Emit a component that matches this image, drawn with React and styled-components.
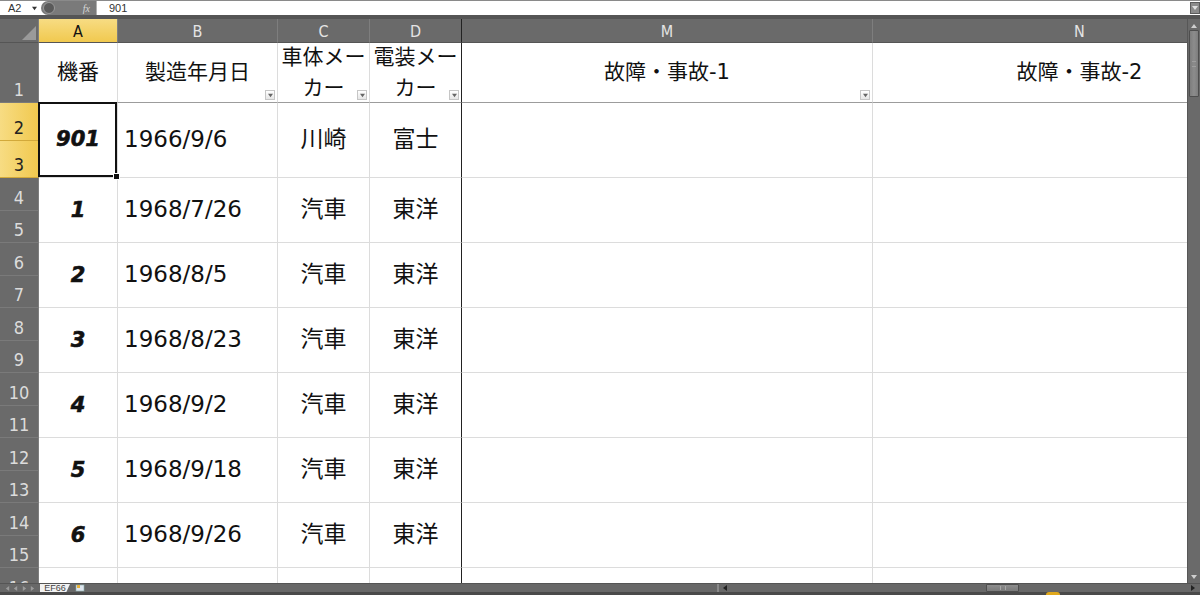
import React from "react";
import styled, { createGlobalStyle } from "styled-components";

const Global = createGlobalStyle`
  html, body { margin: 0; padding: 0; background: #fff; }
  body { width: 1200px; height: 595px; overflow: hidden; font-family: "Liberation Sans", "Noto Sans CJK JP", sans-serif; }
  * { box-sizing: border-box; }
`;

const Window = styled.div`
  width: 1200px;
  height: 595px;
  display: flex;
  flex-direction: column;
  overflow: hidden;
  background: #666;
`;

/* ---------- formula bar ---------- */
const FormulaBar = styled.div`
  height: 15px;
  display: flex;
  align-items: stretch;
  background: #fff;
  border-top: 1px solid #8a8a8a;
  font-family: "Liberation Sans", sans-serif;
  font-size: 11px;
  color: #333;
`;
const NameBox = styled.div`
  width: 41px;
  display: flex;
  align-items: center;
  justify-content: space-between;
  padding: 0 4px 0 8px;
  background: #fff;
`;
const FxPill = styled.div`
  width: 55px;
  display: flex;
  align-items: center;
  justify-content: space-between;
  padding: 0 6px 0 2px;
  background: #7a7a7a;
  border-radius: 8px 0 0 8px;
  color: #d8d8d8;
  font-style: italic;
  font-family: "Liberation Serif", serif;
  font-size: 10px;
`;
const Knob = styled.span`
  width: 12px;
  height: 12px;
  border-radius: 50%;
  background: #5a5a5a;
  border: 1px solid #9a9a9a;
`;
const FormulaInput = styled.div`
  flex: 1;
  display: flex;
  align-items: center;
  padding-left: 12px;
  border-left: 1px solid #b0b0b0;
  font-size: 11px;
`;
const ExpandButton = styled.div`
  width: 10px;
  margin: 1px 0;
  display: flex;
  align-items: center;
  justify-content: center;
  background: #8c8c8c;
  border: 1px solid #5c5c5c;
`;
const Band = styled.div`
  height: 4px;
  background: #555;
`;

/* ---------- main area ---------- */
const Main = styled.div`
  height: 564px;
  display: flex;
`;
const Viewport = styled.div`
  width: 1187px;
  height: 564px;
  overflow: hidden;
  background: #fff;
`;
const Sheet = styled.div`
  display: grid;
  grid-template-columns: 39px 79px 160px 92px 92px 411px 414px;
  grid-template-rows: 24px 60px 38px 37px repeat(13, 32.5px);
  width: max-content;
`;

const Corner = styled.div`
  grid-row: 1;
  grid-column: 1;
  position: relative;
  background: #6a6a6a;
  border-right: 1px solid #7e7e7e;
  border-bottom: 1px solid #555;
  &::after {
    content: "";
    position: absolute;
    right: 2px;
    bottom: 2px;
    width: 14px;
    height: 14px;
    background: #9a9a9a;
    clip-path: polygon(100% 0, 100% 100%, 0 100%);
  }
`;

const ColHead = styled.div`
  grid-row: 1;
  grid-column: ${(p) => p.$col};
  display: flex;
  align-items: center;
  justify-content: center;
  background: ${(p) => (p.$active ? "linear-gradient(#f7dc83, #f1c94f)" : "#6a6a6a")};
  color: ${(p) => (p.$active ? "#111" : "#e4e4e4")};
  border-right: 1px solid ${(p) => (p.$freeze ? "#222" : "#7e7e7e")};
  border-bottom: 1px solid #555;
  font-family: "DejaVu Sans Condensed", "Liberation Sans Narrow", "Liberation Sans", sans-serif;
  font-stretch: condensed;
  font-size: 16px;
  padding-top: 1px;
`;

const RowHead = styled.div`
  grid-row: ${(p) => p.$row};
  grid-column: 1;
  display: flex;
  align-items: flex-end;
  justify-content: center;
  padding-bottom: 2px;
  background: ${(p) => (p.$active ? "linear-gradient(90deg, #f7dc83, #f1c94f)" : "#6a6a6a")};
  color: ${(p) => (p.$active ? "#222" : "#dcdcdc")};
  border-bottom: 1px solid ${(p) => (p.$active ? "#d2a93a" : "#7a7a7a")};
  border-right: 1px solid #7e7e7e;
  font-family: "DejaVu Sans Condensed", "Liberation Sans Narrow", "Liberation Sans", sans-serif;
  font-stretch: condensed;
  font-size: 18px;
`;

const Cell = styled.div`
  position: relative;
  grid-row: ${(p) => p.$row} / span ${(p) => p.$span || 1};
  grid-column: ${(p) => p.$col};
  display: flex;
  align-items: center;
  justify-content: ${(p) => (p.$left ? "flex-start" : "center")};
  padding-left: ${(p) => (p.$left ? "6px" : "0")};
  text-align: center;
  white-space: nowrap;
  border-right: 1px solid ${(p) => (p.$freeze ? "#222" : "#dcdcdc")};
  border-bottom: 1px solid ${(p) => (p.$head ? "#9c9c9c" : "#dcdcdc")};
  color: #111;
  font-family: "DejaVu Sans", "Noto Sans CJK JP", sans-serif;
  font-size: ${(p) => (p.$head ? "21px" : "23px")};
  line-height: ${(p) => (p.$head ? "31px" : "1.2")};
  ${(p) =>
    p.$selected &&
    `
    &::after {
      content: "";
      position: absolute;
      left: -1px; top: -1px; right: 0; bottom: 0;
      border: 2px solid #111;
    }
    &::before {
      content: "";
      position: absolute;
      right: -3px; bottom: -3px;
      width: 5px; height: 5px;
      background: #111;
      border: 1px solid #fff;
      z-index: 2;
    }
  `}
`;

const HeadText = styled.span`
  display: block;
`;

const Number = styled.span`
  font-family: "DejaVu Sans", sans-serif;
  font-weight: 700;
  font-style: italic;
  font-size: 21px;
  -webkit-text-stroke: 0.6px #111;
  padding-top: ${(p) => (p.$top ? "2px" : "0")};
`;

const FilterButton = styled.span`
  position: absolute;
  right: 2px;
  bottom: 2px;
  width: 10px;
  height: 10px;
  display: flex;
  align-items: center;
  justify-content: center;
  background: linear-gradient(#ffffff, #e6e6e6);
  border: 1px solid #c6c6c6;
`;

/* ---------- vertical scrollbar ---------- */
const VScroll = styled.div`
  width: 13px;
  display: flex;
  flex-direction: column;
  align-items: center;
  background: #6a6a6a;
  border-left: 1px solid #575757;
  padding-top: 4px;
`;
const ArrowBox = styled.div`
  height: ${(p) => p.$h || 8}px;
  display: flex;
  align-items: center;
  justify-content: center;
`;
const VThumb = styled.div`
  width: 10px;
  height: 67px;
  margin-top: 1px;
  background: linear-gradient(90deg, #7d7d7d, #8c8c8c, #7d7d7d);
  border: 1px solid #4e4e4e;
  border-radius: 1px;
  display: flex;
  align-items: center;
  justify-content: center;
`;
const Grip = styled.span`
  width: 4px;
  height: 6px;
  border-top: 1px solid #9e9e9e;
  border-bottom: 1px solid #9e9e9e;
`;
const VSpacer = styled.div`
  flex: 1;
`;

/* ---------- bottom bar ---------- */
const TabBar = styled.div`
  height: 9px;
  display: flex;
  align-items: stretch;
  background: #686868;
  border-top: 1px solid #555;
`;
const Nav = styled.div`
  width: 40px;
  display: flex;
  align-items: center;
  justify-content: space-around;
  padding: 0 3px;
`;
const SheetTab = styled.div`
  width: 30px;
  display: flex;
  align-items: center;
  justify-content: center;
  background: #f2f2f2;
  color: #444;
  font-family: "Liberation Sans", sans-serif;
  font-size: 9px;
  line-height: 8px;
  clip-path: polygon(0 0, 100% 0, 88% 100%, 0 100%);
`;
const NewSheet = styled.div`
  width: 20px;
  display: flex;
  align-items: center;
  justify-content: center;
`;
const Gap = styled.div`
  flex: 1;
`;
const HScroll = styled.div`
  width: 483px;
  display: flex;
  align-items: center;
  border-left: 2px solid #8a8a8a;
  padding: 0 4px 0 3px;
`;
const HTrackGap = styled.div`
  width: ${(p) => p.$w}px;
  flex: ${(p) => (p.$grow ? 1 : "none")};
`;
const HThumb = styled.div`
  width: 33px;
  height: 8px;
  background: linear-gradient(#8d8d8d, #7a7a7a);
  border: 1px solid #4e4e4e;
  border-radius: 1px;
  display: flex;
  align-items: center;
  justify-content: center;
`;
const HGrip = styled.span`
  width: 6px;
  height: 4px;
  border-left: 1px solid #a8a8a8;
  border-right: 1px solid #a8a8a8;
`;
const StatusBand = styled.div`
  height: 3px;
  background: #4a4a4a;
  display: flex;
  justify-content: flex-start;
  padding-left: 1046px;
`;
const StatusDot = styled.span`
  width: 14px;
  height: 3px;
  border-radius: 3px 3px 0 0;
  background: #e0a81c;
`;

const Tri = ({ dir = "down", color = "#555", size = 5 }) => {
  const pts = {
    down: "0,1 6,1 3,5",
    up: "0,5 6,5 3,1",
    left: "5,0 5,6 1,3",
    right: "1,0 1,6 5,3",
  }[dir];
  return (
    <svg width={size} height={size} viewBox="0 0 6 6">
      <polygon points={pts} fill={color} />
    </svg>
  );
};

const Filter = () => (
  <FilterButton>
    <Tri dir="down" color="#666" size={5} />
  </FilterButton>
);

const columns = [
  { key: "A", col: 2 },
  { key: "B", col: 3 },
  { key: "C", col: 4 },
  { key: "D", col: 5, freeze: true },
  { key: "M", col: 6 },
  { key: "N", col: 7 },
];

const records = [
  { no: "901", date: "1966/9/6", body: "川崎", elec: "富士" },
  { no: "1", date: "1968/7/26", body: "汽車", elec: "東洋" },
  { no: "2", date: "1968/8/5", body: "汽車", elec: "東洋" },
  { no: "3", date: "1968/8/23", body: "汽車", elec: "東洋" },
  { no: "4", date: "1968/9/2", body: "汽車", elec: "東洋" },
  { no: "5", date: "1968/9/18", body: "汽車", elec: "東洋" },
  { no: "6", date: "1968/9/26", body: "汽車", elec: "東洋" },
];

export default function App() {
  return (
    <>
      <Global />
      <Window>
        <FormulaBar>
          <NameBox>
            A2 <Tri dir="down" color="#333" size={5} />
          </NameBox>
          <FxPill>
            <Knob />
            <span>fx</span>
          </FxPill>
          <FormulaInput>901</FormulaInput>
          <ExpandButton>
            <Tri dir="down" color="#e0e0e0" size={6} />
          </ExpandButton>
        </FormulaBar>
        <Band />
        <Main>
          <Viewport>
            <Sheet>
              <Corner />
              {columns.map((c) => (
                <ColHead key={c.key} $col={c.col} $active={c.key === "A"} $freeze={c.freeze}>
                  {c.key}
                </ColHead>
              ))}

              <RowHead $row={2}>1</RowHead>
              <Cell $row={2} $col={2} $head>
                機番
              </Cell>
              <Cell $row={2} $col={3} $head>
                製造年月日
                <Filter />
              </Cell>
              <Cell $row={2} $col={4} $head>
                <div>
                  <HeadText>車体メー</HeadText>
                  <HeadText>カー</HeadText>
                </div>
                <Filter />
              </Cell>
              <Cell $row={2} $col={5} $head $freeze>
                <div>
                  <HeadText>電装メー</HeadText>
                  <HeadText>カー</HeadText>
                </div>
                <Filter />
              </Cell>
              <Cell $row={2} $col={6} $head>
                故障・事故-1
                <Filter />
              </Cell>
              <Cell $row={2} $col={7} $head>
                故障・事故-2
              </Cell>

              {records.map((r, i) => {
                const row = 3 + i * 2;
                const first = i === 0;
                return (
                  <React.Fragment key={r.no}>
                    <RowHead $row={row} $active={first}>
                      {2 + i * 2}
                    </RowHead>
                    <RowHead $row={row + 1} $active={first}>
                      {3 + i * 2}
                    </RowHead>
                    <Cell $row={row} $span={2} $col={2} $selected={first}>
                      <Number $top={!first}>{r.no}</Number>
                    </Cell>
                    <Cell $row={row} $span={2} $col={3} $left>
                      {r.date}
                    </Cell>
                    <Cell $row={row} $span={2} $col={4}>
                      {r.body}
                    </Cell>
                    <Cell $row={row} $span={2} $col={5} $freeze>
                      {r.elec}
                    </Cell>
                    <Cell $row={row} $span={2} $col={6} />
                    <Cell $row={row} $span={2} $col={7} />
                  </React.Fragment>
                );
              })}

              <RowHead $row={17}>16</RowHead>
              {columns.map((c) => (
                <Cell key={c.key} $row={17} $col={c.col} $freeze={c.freeze} />
              ))}
            </Sheet>
          </Viewport>
          <VScroll>
            <ArrowBox $h={6}>
              <Tri dir="up" color="#cfcfcf" size={6} />
            </ArrowBox>
            <VThumb>
              <Grip />
            </VThumb>
            <VSpacer />
            <ArrowBox $h={12}>
              <Tri dir="down" color="#cfcfcf" size={6} />
            </ArrowBox>
          </VScroll>
        </Main>
        <TabBar>
          <Nav>
            <Tri dir="left" color="#9a9a9a" size={5} />
            <Tri dir="left" color="#9a9a9a" size={5} />
            <Tri dir="right" color="#9a9a9a" size={5} />
            <Tri dir="right" color="#9a9a9a" size={5} />
          </Nav>
          <SheetTab>EF66</SheetTab>
          <NewSheet>
            <svg width="12" height="8" viewBox="0 0 12 8">
              <rect x="2" y="1" width="8" height="6" fill="#dfe6ee" stroke="#8aa" strokeWidth="0.6" />
              <rect x="3" y="1" width="3" height="3" fill="#e8b23a" />
            </svg>
          </NewSheet>
          <Gap />
          <HScroll>
            <Tri dir="left" color="#222" size={6} />
            <HTrackGap $w={258} />
            <HThumb>
              <HGrip />
            </HThumb>
            <HTrackGap $grow />
            <Tri dir="right" color="#222" size={6} />
          </HScroll>
        </TabBar>
        <StatusBand>
          <StatusDot />
        </StatusBand>
      </Window>
    </>
  );
}
